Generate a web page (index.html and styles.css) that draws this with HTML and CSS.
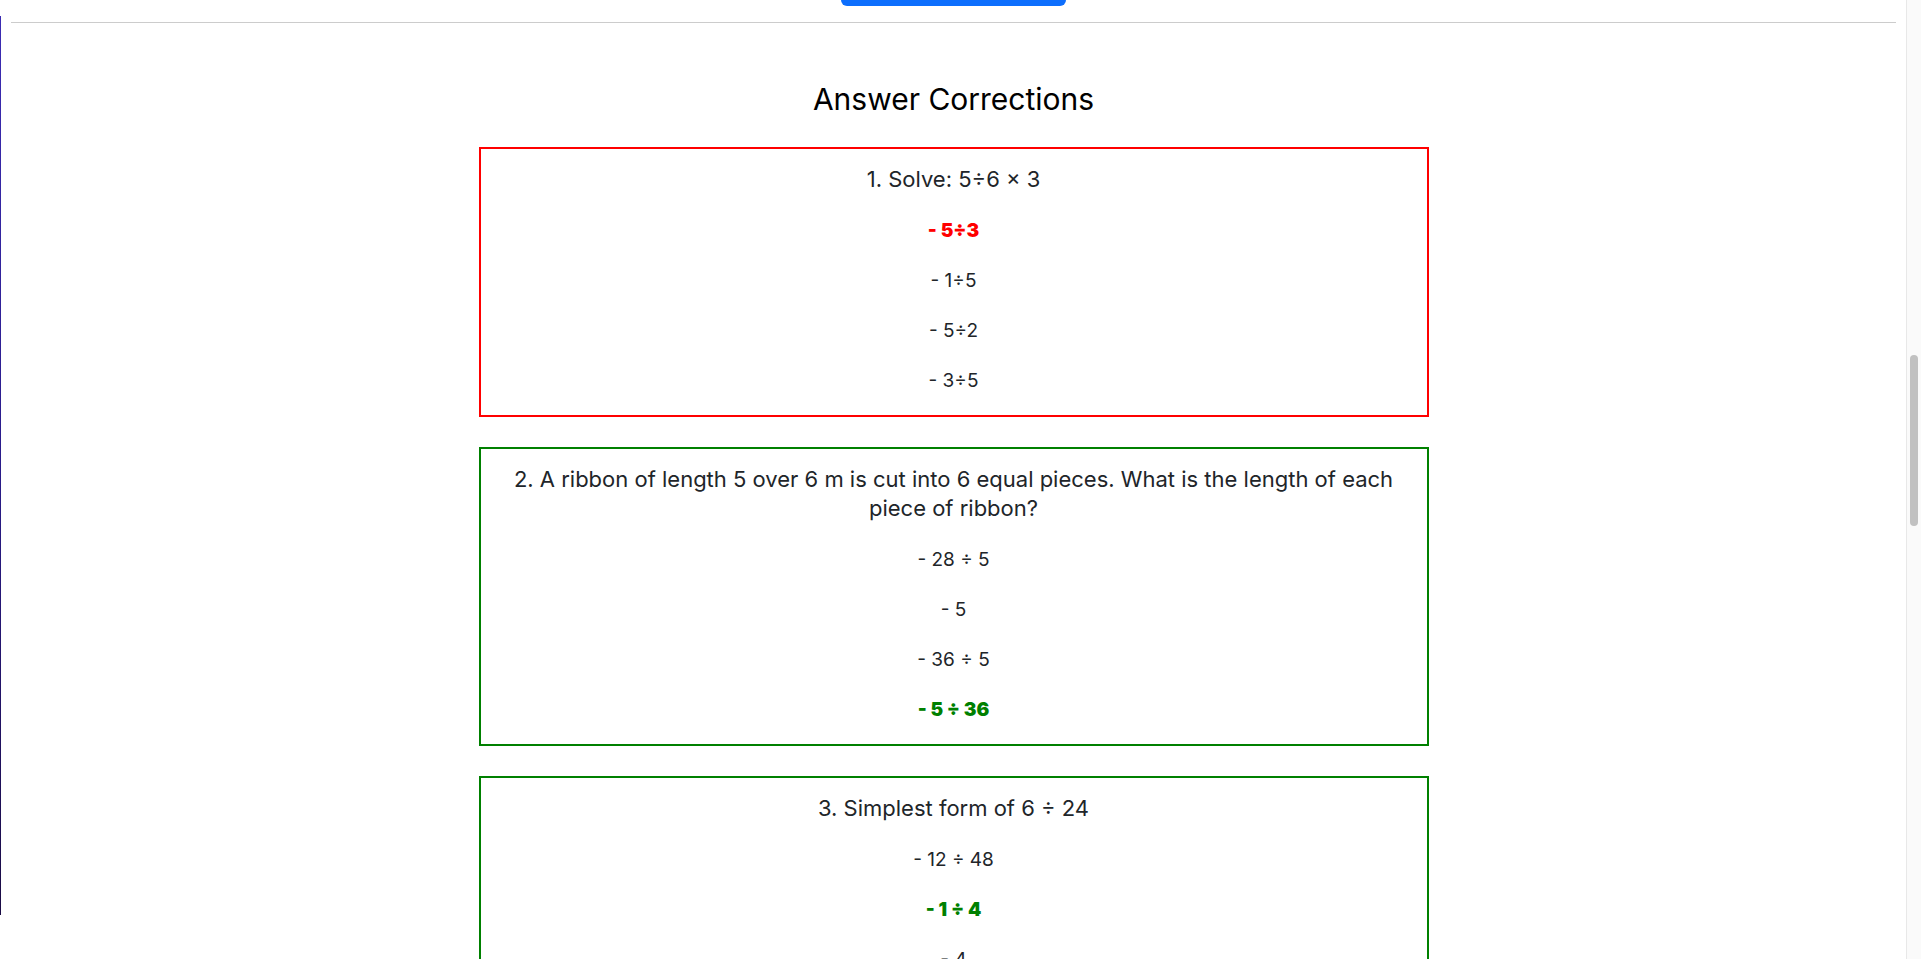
FILE: index.html
```html
<!DOCTYPE html>
<html lang="en">
<head>
<meta charset="utf-8">
<title>Answer Corrections</title>
<link rel="stylesheet" href="styles.css">
</head>
<body>
<div class="page">
  <div class="rail"></div>
  <main class="main">
    <div class="actions"><button class="btn" type="button">Submit</button></div>
    <hr class="divider">
    <h2 class="title">Answer Corrections</h2>
    <section class="card card-wrong">
      <p class="question">1. Solve: 5÷6 × 3</p>
      <p class="option option-wrong">- 5÷3</p>
      <p class="option">- 1÷5</p>
      <p class="option">- 5÷2</p>
      <p class="option">- 3÷5</p>
    </section>
    <section class="card card-right">
      <p class="question">2. A ribbon of length 5 over 6 m is cut into 6 equal pieces. What is the length of each piece of ribbon?</p>
      <p class="option">- 28 ÷ 5</p>
      <p class="option">- 5</p>
      <p class="option">- 36 ÷ 5</p>
      <p class="option option-right">- 5 ÷ 36</p>
    </section>
    <section class="card card-right">
      <p class="question">3. Simplest form of 6 ÷ 24</p>
      <p class="option">- 12 ÷ 48</p>
      <p class="option option-right">- 1 ÷ 4</p>
      <p class="option">- 4</p>
      <p class="option">- 2 ÷ 6</p>
    </section>
  </main>
  <div class="scrollbar"><div class="scrollbar-thumb"></div></div>
</div>
</body>
</html>
```
FILE: styles.css
```css
html, body {
  margin: 0;
  padding: 0;
  background: #ffffff;
}

body {
  font-family: Inter, "Noto Sans", "Liberation Sans", sans-serif;
  color: #212529;
}

.page {
  display: flex;
  align-items: flex-start;
  height: 100vh;
  overflow: hidden;
}

.rail {
  flex: 0 0 1px;
  width: 1px;
  height: 899px;
  margin-top: 16px;
  background: linear-gradient(to bottom, #3b2cb3 0%, #2a1c8a 50%, #1a0b45 100%);
}

.main {
  flex: 1;
  padding: 0 10px 40px;
  min-width: 0;
}

.scrollbar {
  flex: 0 0 15px;
  width: 15px;
  height: 100vh;
  box-sizing: border-box;
  background: #fafafa;
  border-left: 1px solid #e8e8e8;
  display: flex;
  flex-direction: column;
  align-items: center;
}

.scrollbar-thumb {
  width: 8px;
  height: 171px;
  margin-top: 355px;
  border-radius: 4px;
  background: #c1c1c1;
}

.actions {
  display: flex;
  justify-content: center;
}

.btn {
  width: 225px;
  height: 38px;
  margin-top: -32px;
  border: none;
  border-radius: 6px;
  background: #0d6efd;
  color: #ffffff;
  font-family: inherit;
  font-size: 16px;
}

.divider {
  margin: 16px 0 0;
  border: 0;
  border-top: 1px solid #cccccc;
  height: 0;
}

.title {
  margin: 60px 0 32px;
  text-align: center;
  font-size: 30px;
  line-height: 32px;
  font-weight: 400;
  color: #000000;
}

.card {
  width: 950px;
  box-sizing: border-box;
  margin: 0 auto 30px;
  padding: 16px 20px 9px;
  border: 2px solid;
  text-align: center;
}

.card-wrong { border-color: #ff0000; }
.card-right { border-color: #008000; }

.question {
  margin: 0 0 12px;
  font-size: 22px;
  line-height: 29px;
  font-weight: 400;
}

.option {
  margin: 0;
  font-size: 19px;
  line-height: 50px;
}

.option-wrong {
  color: #ff0000;
  font-weight: 900;
}

.option-right {
  color: #008000;
  font-weight: 900;
}
```
